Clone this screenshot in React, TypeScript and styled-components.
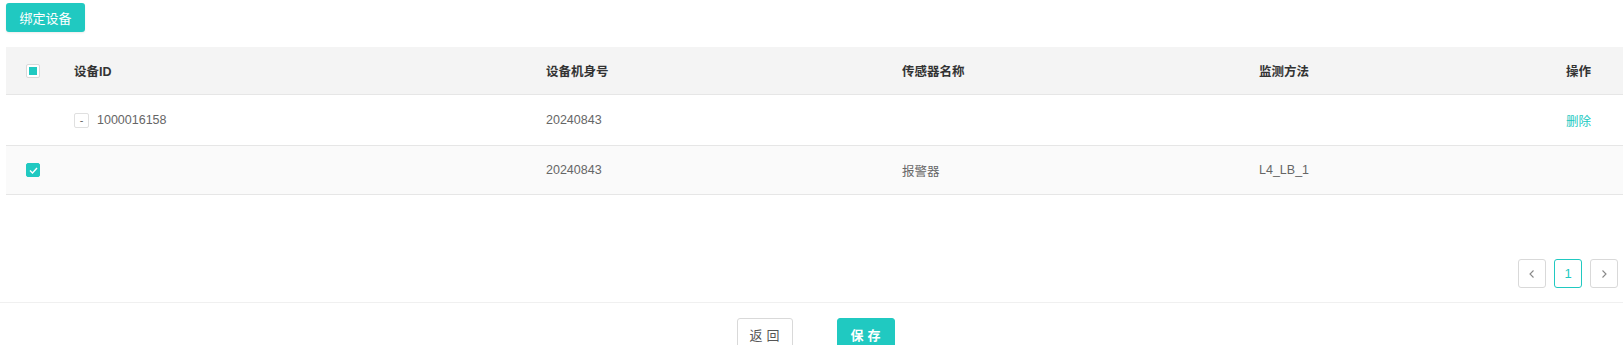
import React from 'react'
import styled, { createGlobalStyle } from 'styled-components'

const TEAL = '#20c9c1'

const GlobalStyle = createGlobalStyle`
  html, body {
    margin: 0;
    padding: 0;
    background: #fff;
    font-family: 'Liberation Sans', 'Noto Sans CJK SC', sans-serif;
  }
  * {
    box-sizing: border-box;
  }
`

interface RowType {
  id: string
  serial: string
  sensor: string
  method: string
  parent: boolean
}

const rows: RowType[] = [
  { id: '1000016158', serial: '20240843', sensor: '', method: '', parent: true },
  { id: '', serial: '20240843', sensor: '报警器', method: 'L4_LB_1', parent: false },
]

const columns = '52px 472px 356px 357px 307px 1fr'

const CheckIcon = () => (
  <svg width="11" height="11" viewBox="0 0 11 11">
    <path d="M2 5.6 L4.5 8 L9 3" fill="none" stroke="#fff" strokeWidth="1.4" />
  </svg>
)

const Chevron = ({ dir }: { dir: 'left' | 'right' }) => (
  <svg width="10" height="10" viewBox="0 0 10 10">
    <path
      d={dir === 'left' ? 'M6.5 1.5 L3 5 L6.5 8.5' : 'M3.5 1.5 L7 5 L3.5 8.5'}
      fill="none"
      stroke="#888"
      strokeWidth="1.1"
    />
  </svg>
)

const App = () => {
  return (
    <>
      <GlobalStyle />
      <Main>
        <BindButton>绑定设备</BindButton>
        <Table>
          <HeaderRow>
            <CheckCell>
              <Checkbox>
                <Indeterminate />
              </Checkbox>
            </CheckCell>
            <HeadCell>设备ID</HeadCell>
            <HeadCell>设备机身号</HeadCell>
            <HeadCell>传感器名称</HeadCell>
            <HeadCell>监测方法</HeadCell>
            <HeadCell>操作</HeadCell>
          </HeaderRow>
          {rows.map((row, i) => (
            <BodyRow key={i} child={!row.parent}>
              <CheckCell>
                {!row.parent && (
                  <Checkbox checked>
                    <CheckIcon />
                  </Checkbox>
                )}
              </CheckCell>
              <Cell>
                {row.parent && <ExpandIcon>-</ExpandIcon>}
                {row.id}
              </Cell>
              <Cell>{row.serial}</Cell>
              <Cell>{row.sensor}</Cell>
              <Cell>{row.method}</Cell>
              <Cell>{row.parent && <LinkText>删除</LinkText>}</Cell>
            </BodyRow>
          ))}
        </Table>
        <Pagination>
          <PageButton>
            <Chevron dir="left" />
          </PageButton>
          <PageButton active>1</PageButton>
          <PageButton>
            <Chevron dir="right" />
          </PageButton>
        </Pagination>
      </Main>
      <Footer>
        <FooterButton>返回</FooterButton>
        <FooterButton primary>保存</FooterButton>
      </Footer>
    </>
  )
}

export default App

const Main = styled.div`
  padding: 3px 0 0 6px;
  display: flex;
  flex-direction: column;
`

const BindButton = styled.button`
  align-self: flex-start;
  width: 79px;
  height: 29px;
  border: none;
  border-radius: 3px;
  background: ${TEAL};
  color: #fff;
  font-family: inherit;
  font-size: 13px;
  padding: 0;
  box-shadow: 0 1px 2px rgba(0, 0, 0, 0.08);
`

const Table = styled.div`
  margin-top: 15px;
  display: flex;
  flex-direction: column;
`

const HeaderRow = styled.div`
  display: grid;
  grid-template-columns: ${columns};
  height: 48px;
  background: #f4f4f4;
  border-bottom: 1px solid #e6e6e6;
  align-items: center;
`

const BodyRow = styled.div<{ child?: boolean }>`
  display: grid;
  grid-template-columns: ${columns};
  height: ${({ child }) => (child ? '49px' : '51px')};
  background: ${({ child }) => (child ? '#fafafa' : '#fff')};
  border-bottom: 1px solid #e6e6e6;
  align-items: center;
`

const CheckCell = styled.div`
  padding-left: 20px;
  display: flex;
  align-items: center;
`

const HeadCell = styled.div`
  padding-left: 16px;
  font-size: 12.5px;
  font-weight: 700;
  color: #333;
`

const Cell = styled.div`
  padding-left: 16px;
  font-size: 12.5px;
  color: #666;
  display: flex;
  align-items: center;
`

const Checkbox = styled.span<{ checked?: boolean }>`
  width: 14px;
  height: 14px;
  border-radius: 2px;
  border: 1px solid ${({ checked }) => (checked ? TEAL : '#d9d9d9')};
  background: ${({ checked }) => (checked ? TEAL : '#fff')};
  display: flex;
  align-items: center;
  justify-content: center;
`

const Indeterminate = styled.span`
  width: 8px;
  height: 8px;
  background: ${TEAL};
`

const ExpandIcon = styled.span`
  width: 15px;
  height: 15px;
  border: 1px solid #e0e0e0;
  border-radius: 2px;
  background: #fff;
  color: #666;
  font-size: 11px;
  line-height: 12px;
  text-align: center;
  margin-right: 8px;
`

const LinkText = styled.span`
  color: ${TEAL};
`

const Pagination = styled.div`
  margin: 64px 5px 0 0;
  align-self: flex-end;
  display: flex;
  gap: 8px;
`

const PageButton = styled.div<{ active?: boolean }>`
  width: 28px;
  height: 29px;
  border: 1px solid ${({ active }) => (active ? TEAL : '#d9d9d9')};
  border-radius: 3px;
  color: ${TEAL};
  font-size: 13px;
  display: flex;
  align-items: center;
  justify-content: center;
`

const Footer = styled.div`
  margin-top: 14px;
  border-top: 1px solid #f0f0f0;
  padding-top: 15px;
  display: flex;
  justify-content: center;
  gap: 44px;
  padding-left: 8px;
`

const FooterButton = styled.button<{ primary?: boolean }>`
  width: ${({ primary }) => (primary ? '58px' : '56px')};
  height: 32px;
  border-radius: 3px;
  border: 1px solid ${({ primary }) => (primary ? TEAL : '#d9d9d9')};
  background: ${({ primary }) => (primary ? TEAL : '#fff')};
  color: ${({ primary }) => (primary ? '#fff' : '#555')};
  font-family: inherit;
  font-size: 13px;
  font-weight: ${({ primary }) => (primary ? 700 : 400)};
  letter-spacing: 4px;
  padding: 0 0 0 4px;
`
